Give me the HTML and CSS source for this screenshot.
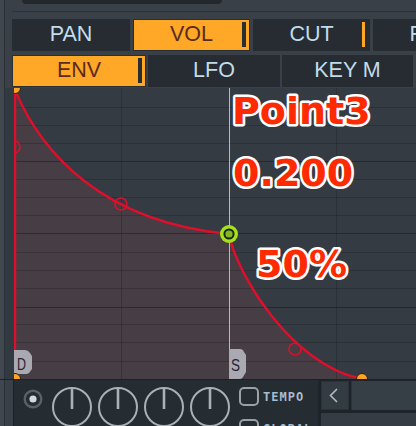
FILE: index.html
```html
<!DOCTYPE html>
<html>
<head>
<meta charset="utf-8">
<link rel="stylesheet" href="styles.css">
</head>
<body class="app">
  <div class="top">
    <div class="top-pill"></div>
    <div class="top-rule"></div>
  </div>

  <div class="tabs tabs-main">
    <div class="tab tab-pan">PAN</div>
    <div class="tab on mark">VOL</div>
    <div class="tab mark mark-orange">CUT</div>
    <div class="tab">RES</div>
  </div>

  <div class="tabs tabs-sub">
    <div class="tab tab-env on mark">ENV</div>
    <div class="tab tab-lfo">LFO</div>
    <div class="tab tab-key">KEY M</div>
  </div>

  <div class="graph-row">
    <div class="graph-gutter"></div>
    <svg class="env" width="402" height="291" viewBox="0 0 402 291">
      <rect width="402" height="291" fill="#343b43"/>
      <path fill="#463d45" d="M1,291 L1,2 C26,62 86,134 215,146 C221,182 276,277 348,291 Z"/>
      <path stroke="rgba(0,0,0,0.17)" stroke-width="1" fill="none"
        d="M0,19.5H402 M0,37.5H402 M0,55.5H402 M0,91.5H402 M0,109.5H402 M0,127.5H402 M0,164.5H402 M0,182.5H402 M0,200.5H402 M0,236.5H402 M0,254.5H402 M0,273.5H402 M107.5,0V291 M322.5,0V291"/>
      <path stroke="rgba(0,0,0,0.32)" stroke-width="1" fill="none"
        d="M0,73.5H402 M0,145.5H402 M0,219.5H402"/>
      <path stroke="#b5babe" stroke-width="1" fill="none" d="M215.5,0V291"/>
      <path stroke="#dc0f2c" stroke-width="2.5" fill="none" d="M1,291 V2"/>
      <path stroke="#dc0f2c" stroke-width="2.5" fill="none" stroke-linecap="round"
        d="M1,2 C26,62 86,134 215,146 C221,182 276,277 348,291"/>
      <g fill="none" stroke="#dc0f2c" stroke-width="1.6">
        <circle cx="0" cy="59" r="6"/>
        <circle cx="107" cy="116" r="6"/>
        <circle cx="281" cy="261" r="6"/>
      </g>
      <path fill="#a9a9b1" d="M0,262 H11 Q14,262 16,265 L18,268 V281 L15,285 Q14,286 12,286 H0 Z"/>
      <text class="tag-letter" x="3" y="282" textLength="9" lengthAdjust="spacingAndGlyphs">D</text>
      <path fill="#a9a9b1" d="M215,261 H226 Q229,261 230,264 L232,267 V284 L229,289 Q228,291 226,291 H215 Z"/>
      <text class="tag-letter" x="217" y="283" textLength="9" lengthAdjust="spacingAndGlyphs">S</text>
      <g fill="#ffa424" stroke="#2b2118" stroke-width="1">
        <circle cx="1" cy="0" r="5.5"/>
        <circle cx="1" cy="291" r="5.5"/>
        <circle cx="348" cy="291" r="5.5"/>
      </g>
      <circle cx="215" cy="146" r="9" fill="#a6e21c"/>
      <circle cx="215" cy="146" r="4.6" fill="#86b62a" stroke="#1d2612" stroke-width="2"/>
      <g class="callout">
        <text x="218" y="36">Point3</text>
        <text x="219" y="98">0.200</text>
        <text x="242" y="189">50%</text>
      </g>
    </svg>
  </div>

  <div class="bottom">
    <div class="bottom-gutter"></div>
    <div class="bottom-main">
      <div class="panel">
        <svg class="radio" width="20" height="20" viewBox="0 0 20 20">
          <circle cx="10" cy="10" r="8.3" fill="none" stroke="#59626a" stroke-width="2.4"/>
          <circle cx="10" cy="10" r="3.6" fill="#d3d9dd"/>
        </svg>
        <div class="knobs">
          <svg class="knob" width="40" height="40" viewBox="0 0 40 40"><circle cx="20" cy="20" r="19" fill="none" stroke="#aab1b6" stroke-width="2"/><path d="M20,1 V22" stroke="#aab1b6" stroke-width="2.6"/></svg>
          <svg class="knob" width="40" height="40" viewBox="0 0 40 40"><circle cx="20" cy="20" r="19" fill="none" stroke="#aab1b6" stroke-width="2"/><path d="M20,1 V22" stroke="#aab1b6" stroke-width="2.6"/></svg>
          <svg class="knob" width="40" height="40" viewBox="0 0 40 40"><circle cx="20" cy="20" r="19" fill="none" stroke="#aab1b6" stroke-width="2"/><path d="M20,1 V22" stroke="#aab1b6" stroke-width="2.6"/></svg>
          <svg class="knob" width="40" height="40" viewBox="0 0 40 40"><circle cx="20" cy="20" r="19" fill="none" stroke="#aab1b6" stroke-width="2"/><path d="M20,1 V22" stroke="#aab1b6" stroke-width="2.6"/></svg>
        </div>
        <div class="checks">
          <div class="check"><span class="box"></span><span class="check-label">TEMPO</span></div>
          <div class="check"><span class="box"></span><span class="check-label">GLOBAL</span></div>
        </div>
      </div>
      <div class="side">
        <div class="side-row">
          <div class="nav-btn">
            <svg width="10" height="15" viewBox="0 0 10 15"><path d="M8,1 L1.5,7.5 L8,14" fill="none" stroke="#b3bbc1" stroke-width="1.6"/></svg>
          </div>
          <div class="side-field"></div>
        </div>
        <div class="side-box"></div>
      </div>
    </div>
  </div>
</body>
</html>
```

FILE: styles.css
```css
html, body {
  margin: 0;
  padding: 0;
}

.app {
  width: 416px;
  height: 426px;
  overflow: hidden;
  font-family: "Liberation Sans", Arial, sans-serif;
  background: linear-gradient(to right, #40474e 0, #40474e 4px, #2a3036 4px, #2a3036 5px, #394047 5px);
}

.top {
  height: 19px;
}

.top-pill {
  margin-left: 22px;
  width: 200px;
  height: 4px;
  background: #24282d;
  border-radius: 0 0 8px 8px;
}

.top-rule {
  margin-top: 7px;
  margin-left: 12px;
  height: 1px;
  background: #2c3238;
}

.tabs {
  display: flex;
  height: 32px;
  padding-left: 12px;
  overflow: hidden;
}

.tabs-main {
  gap: 3px;
  margin-bottom: 4px;
}

.tabs-sub {
  gap: 2px;
}

.tab {
  flex: 0 0 auto;
  width: 117px;
  box-sizing: border-box;
  display: flex;
  align-items: center;
  justify-content: center;
  position: relative;
  background: #262c32;
  color: #c1dcea;
  font-size: 21.5px;
  line-height: 1;
}

.tab-pan { width: 118px; }
.tab-env { width: 134px; }
.tab-lfo { width: 132px; }
.tab-key { width: 131px; }

.tab.on {
  background: #ffa726;
  color: #5b2b1d;
  box-shadow: inset 0 0 0 1px #2a2d31;
}

.tab.mark::after {
  content: "";
  position: absolute;
  right: 4px;
  top: 3px;
  bottom: 4px;
  width: 4px;
  background: #2a2d31;
}

.tab.mark-orange::after {
  background: #ffa726;
  width: 3.5px;
  right: 5px;
}

.graph-row {
  display: flex;
  margin-top: 1px;
  height: 291px;
}

.graph-gutter {
  width: 9px;
  margin-left: 5px;
  background: #323a41;
}

.env {
  display: block;
  flex: 0 0 auto;
  overflow: hidden;
}

.tag-letter {
  font-family: "Liberation Sans", Arial, sans-serif;
  font-size: 16px;
  fill: #2a2233;
}

.callout text {
  font-family: "DejaVu Sans", sans-serif;
  font-weight: bold;
  font-size: 38px;
  fill: #ff2b00;
  stroke: #ffffff;
  stroke-width: 5px;
  stroke-linejoin: round;
  paint-order: stroke fill;
}

.bottom {
  display: flex;
  height: 46px;
  border-top: 1px solid #1c2126;
}

.bottom-gutter {
  width: 13px;
  flex: 0 0 auto;
}

.bottom-main {
  flex: 1;
  display: flex;
  background: #1e2429;
}

.panel {
  width: 305px;
  flex: 0 0 auto;
  background: #252c32;
  border-left: 1px solid #1d2227;
  display: flex;
  align-items: flex-start;
  padding-left: 9px;
  padding-top: 7px;
  box-sizing: border-box;
  overflow: hidden;
}

.radio {
  display: block;
  margin-top: 2px;
  margin-right: 9px;
  flex: 0 0 auto;
}

.knobs {
  display: flex;
  gap: 6px;
}

.knob {
  display: block;
  flex: 0 0 auto;
}

.checks {
  display: flex;
  flex-direction: column;
  gap: 13px;
  margin-left: 9px;
}

.check {
  display: flex;
  align-items: center;
  height: 19px;
}

.box {
  width: 20px;
  height: 19px;
  box-sizing: border-box;
  border: 2px solid #9aa2a8;
  border-radius: 5px;
  flex: 0 0 auto;
}

.check-label {
  margin-left: 4px;
  font-family: "DejaVu Sans Mono", monospace;
  font-weight: bold;
  font-size: 12px;
  letter-spacing: 1px;
  color: #a9bccb;
  padding-top: 1px;
}

.side {
  flex: 1;
  display: flex;
  flex-direction: column;
  gap: 3px;
  margin-left: 3px;
  padding-top: 1px;
}

.side-row {
  display: flex;
  gap: 2px;
  height: 29px;
}

.nav-btn {
  width: 28px;
  box-sizing: border-box;
  background: #343c43;
  border: 1px solid #2b3238;
  display: flex;
  align-items: center;
  justify-content: center;
}

.nav-btn svg {
  display: block;
  margin-right: 2px;
}

.side-field {
  flex: 1;
  background: #373f46;
  border-left: 1px solid #2b3238;
}

.side-box {
  flex: 1;
  background: #353c43;
}
```
